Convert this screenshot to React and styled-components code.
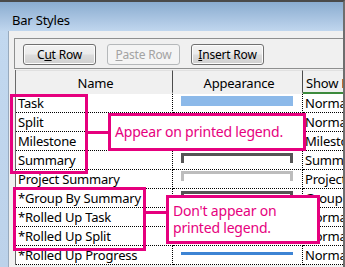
import React from "react";
import styled, { createGlobalStyle } from "styled-components";

const GlobalStyle = createGlobalStyle`
  html, body {
    margin: 0;
    padding: 0;
    background: #ffffff;
  }
  body {
    font-family: "Noto Sans", "Open Sans", sans-serif;
  }
`;

const Window = styled.div`
  width: 345px;
  height: 267px;
  overflow: hidden;
  display: flex;
  flex-direction: column;
  background: #f0f0f0;
  box-sizing: border-box;
  border-top: 2px solid #4a4a4a;
  border-right: 2px solid #6e6e6e;
`;

const TitleBar = styled.div`
  height: 29px;
  flex-shrink: 0;
  display: flex;
  align-items: center;
  padding: 6px 0 0 12px;
  box-sizing: border-box;
  background: linear-gradient(#8aacd0, #c0d6ee);
  font-size: 13px;
  color: #000;
  letter-spacing: -0.2px;
`;

const Body = styled.div`
  flex: 1;
  display: flex;
  min-height: 0;
`;

const SideFrame = styled.div`
  width: 8px;
  flex-shrink: 0;
  background: linear-gradient(#c2d8ef, #bcd2ea);
  border-right: 1px solid #98aabd;
`;

const Content = styled.div`
  flex: 1;
  min-width: 0;
  padding: 7px 0 0 5px;
  display: flex;
  flex-direction: column;
`;

const Toolbar = styled.div`
  height: 31px;
  box-sizing: border-box;
  border: 1px solid #8e8f8f;
  border-right: none;
  display: flex;
  align-items: center;
  gap: 11px;
  padding: 1px 0 0 8px;
`;

const Button = styled.div`
  width: 73px;
  height: 21px;
  box-sizing: border-box;
  border-radius: 3px;
  border: 1px solid ${(p) => (p.$disabled ? "#b5b8ba" : "#707070")};
  background: ${(p) =>
    p.$disabled
      ? "#f4f4f4"
      : "linear-gradient(#f2f2f2 0%, #ebebeb 48%, #dddddd 52%, #cfcfcf 100%)"};
  color: ${(p) => (p.$disabled ? "#a3a3a3" : "#000")};
  font-size: 12px;
  letter-spacing: -0.2px;
  display: flex;
  align-items: center;
  justify-content: center;
  box-shadow: ${(p) => (p.$disabled ? "none" : "inset 0 0 0 1px #fcfcfc")};
`;

const TableArea = styled.div`
  position: relative;
  margin: 1px 0 0 1px;
  font-size: 12px;
  letter-spacing: -0.2px;
`;

const Grid = styled.div`
  display: grid;
  grid-template-columns: 157px 130px 200px;
  border-left: 1px solid #6a6a6a;
`;

const HeadCell = styled.div`
  height: 24px;
  box-sizing: border-box;
  display: flex;
  align-items: center;
  justify-content: ${(p) => (p.$left ? "flex-start" : "center")};
  padding: 2px 0 0 3px;
  border-right: 1px solid #4c4c4c;
  border-bottom: 2px solid ${(p) => (p.$active ? "#3d8b3d" : "#f0f0f0")};
  border-top: 1px solid #e0e0e0;
  background: #f0f0f0;
  color: #000;
  white-space: nowrap;
  overflow: hidden;
  font-size: 13px;
`;

const Cell = styled.div`
  height: 19px;
  box-sizing: border-box;
  background: #fff;
  border-right: 1px dotted #000;
  border-bottom: 1px dotted #000;
  padding-left: 2px;
  display: flex;
  align-items: center;
  white-space: nowrap;
  overflow: hidden;
  color: #000;
  font-size: 13px;
  position: relative;
  &:first-child {
    border-left: 1px dotted #000;
  }
`;

const LookCell = styled(Cell)`
  padding-left: 8px;
  align-items: flex-start;
`;

const Bar = styled.div`
  width: 112px;
  height: 10px;
  margin-top: 2px;
  background: #8cb9e9;
`;

const SplitBar = styled.div`
  width: 112px;
  height: 10px;
  margin-top: 2px;
  background: repeating-linear-gradient(90deg, #8cb9e9 0 20px, transparent 20px 26px);
`;

const Diamond = styled.div`
  width: 9px;
  height: 9px;
  margin: 4px 0 0 4px;
  background: #222;
  transform: rotate(45deg);
`;

const Bracket = styled.div`
  width: 112px;
  height: 10px;
  margin-top: ${(p) => p.$top}px;
  box-sizing: border-box;
  border: 3px solid ${(p) => p.$color};
  border-bottom: none;
`;

const ProgressLine = styled.div`
  width: 112px;
  height: 3px;
  margin-top: 6px;
  background: #3d84d4;
`;

const Frame = styled.div`
  position: absolute;
  left: ${(p) => p.$x}px;
  top: ${(p) => p.$y}px;
  width: ${(p) => p.$w}px;
  height: ${(p) => p.$h}px;
  box-sizing: border-box;
  border: 3px solid #e6007e;
`;

const Connector = styled.div`
  position: absolute;
  left: ${(p) => p.$x}px;
  top: ${(p) => p.$y}px;
  width: ${(p) => p.$w}px;
  height: 3px;
  background: #e6007e;
`;

const Callout = styled(Frame)`
  background: #fff;
  color: #e6007e;
  font-size: 14px;
  line-height: 17px;
  letter-spacing: -0.2px;
  display: flex;
  align-items: center;
  padding: 0 0 1px 4px;
`;

const rows = [
  { name: "Task", look: "bar", show: "Normal" },
  { name: "Split", look: "split", show: "Normal, Split" },
  { name: "Milestone", look: "milestone", show: "Milestone" },
  { name: "Summary", look: "summary", show: "Summary" },
  { name: "Project Summary", look: "project", show: "Project Summary" },
  { name: "*Group By Summary", look: "summary", show: "Group By Summary" },
  { name: "*Rolled Up Task", look: "bar", show: "Normal, Rolled Up" },
  { name: "*Rolled Up Split", look: "split", show: "Normal, Rolled Up, Split" },
  { name: "*Rolled Up Progress", look: "progress", show: "Normal, Rolled Up" },
];

function Look({ kind }) {
  if (kind === "bar") return <Bar />;
  if (kind === "split") return <SplitBar />;
  if (kind === "milestone") return <Diamond />;
  if (kind === "summary") return <Bracket $color="#555555" $top={2} />;
  if (kind === "project") return <Bracket $color="#bdbdbd" $top={1} />;
  return <ProgressLine />;
}

export default function App() {
  return (
    <>
      <GlobalStyle />
      <Window>
        <TitleBar>Bar Styles</TitleBar>
        <Body>
          <SideFrame />
          <Content>
            <Toolbar>
              <Button>
                C<u>u</u>t Row
              </Button>
              <Button $disabled>
                <u>P</u>aste Row
              </Button>
              <Button>
                <u>I</u>nsert Row
              </Button>
            </Toolbar>
            <TableArea>
              <Grid>
                <HeadCell>Name</HeadCell>
                <HeadCell>Appearance</HeadCell>
                <HeadCell $left $active>
                  Show For ... Tasks
                </HeadCell>
                {rows.map((row) => (
                  <React.Fragment key={row.name}>
                    <Cell>{row.name}</Cell>
                    <LookCell>
                      <Look kind={row.look} />
                    </LookCell>
                    <Cell>{row.show}</Cell>
                  </React.Fragment>
                ))}
              </Grid>

              {/* legend callouts */}
              <Frame $x={-5} $y={24} $w={78} $h={80} />
              <Connector $x={73} $y={61} $w={21} />
              <Callout $x={93} $y={43} $w={198} $h={38}>
                Appear on printed legend.
              </Callout>

              <Frame $x={-2} $y={117} $w={133} $h={64} />
              <Connector $x={131} $y={141} $w={21} />
              <Callout $x={151} $y={125} $w={154} $h={49}>
                Don't appear on
                <br />
                printed legend.
              </Callout>
            </TableArea>
          </Content>
        </Body>
      </Window>
    </>
  );
}
